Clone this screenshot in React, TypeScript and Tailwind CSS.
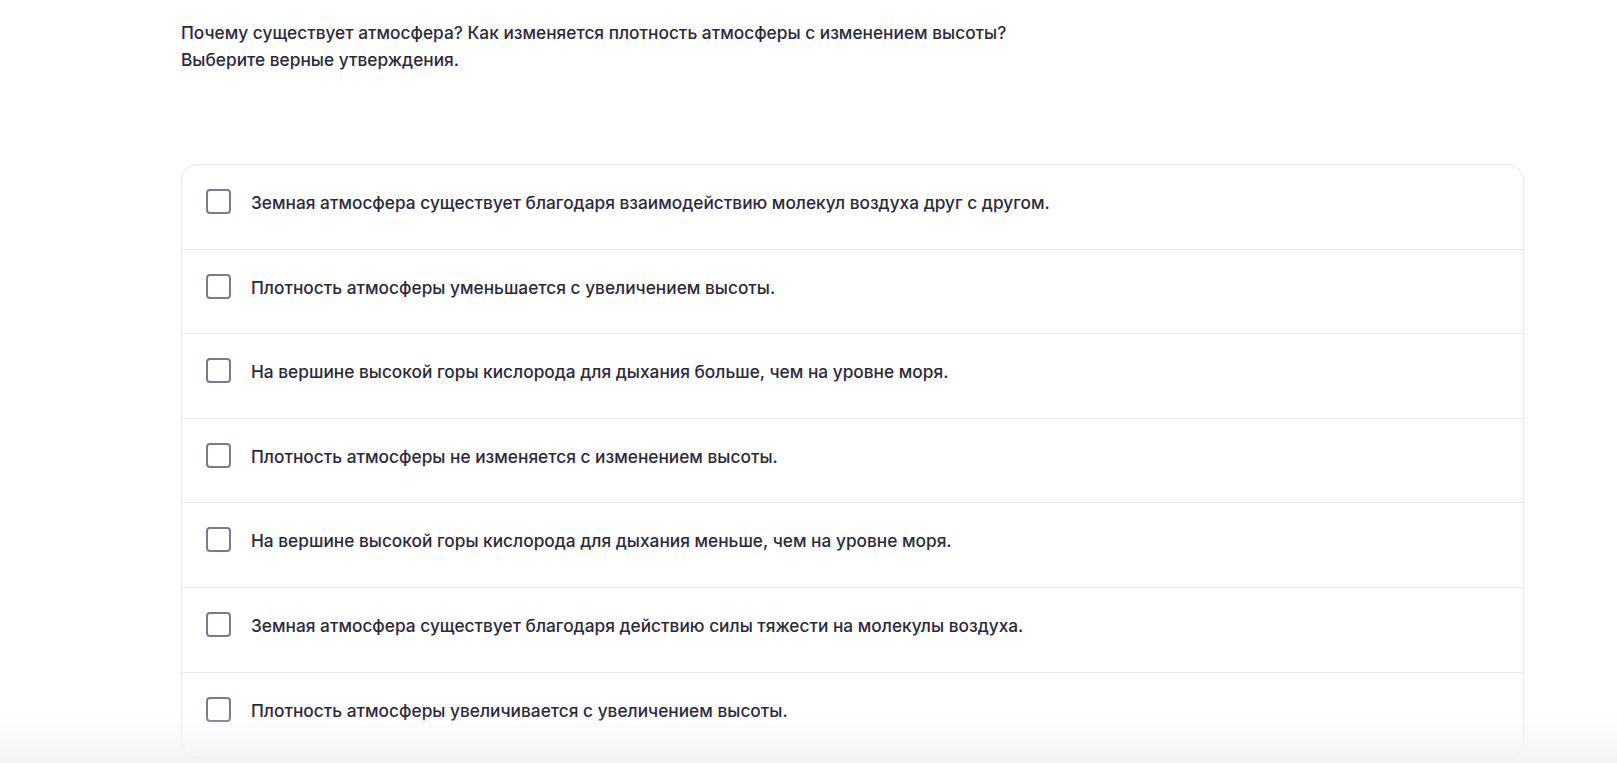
const options = [
  'Земная атмосфера существует благодаря взаимодействию молекул воздуха друг с другом.',
  'Плотность атмосферы уменьшается с увеличением высоты.',
  'На вершине высокой горы кислорода для дыхания больше, чем на уровне моря.',
  'Плотность атмосферы не изменяется с изменением высоты.',
  'На вершине высокой горы кислорода для дыхания меньше, чем на уровне моря.',
  'Земная атмосфера существует благодаря действию силы тяжести на молекулы воздуха.',
  'Плотность атмосферы увеличивается с увеличением высоты.',
];

export default function App() {
  return (
    <div
      className="relative h-[763px] overflow-hidden bg-white pl-[181px] pt-[19px] text-[#2b2939]"
      style={{ fontFamily: 'Inter, "Noto Sans", sans-serif' }}
    >
      <p className="text-[17.3px] font-medium leading-[27px]">
        Почему существует атмосфера? Как изменяется плотность атмосферы с изменением высоты?
        <br />
        Выберите верные утверждения.
      </p>

      <div className="mt-[91px] w-[1343px] rounded-2xl border border-[#e9e9ee] bg-white">
        {options.map((text, i) => (
          <label
            key={i}
            className={
              'flex h-[84.6px] cursor-pointer items-start gap-5 px-6 pt-6 ' +
              (i < options.length - 1 ? 'border-b border-[#ebebef]' : '')
            }
          >
            <span className="h-[25px] w-[25px] shrink-0 rounded-[4px] border-2 border-[#7b7990] bg-white" />
            <span className="text-[17.3px] font-medium leading-[28px]">{text}</span>
          </label>
        ))}
      </div>

      <div className="pointer-events-none absolute inset-x-0 bottom-0 h-[48px] bg-gradient-to-b from-white/0 to-[#f3f3f6]" />
    </div>
  );
}
